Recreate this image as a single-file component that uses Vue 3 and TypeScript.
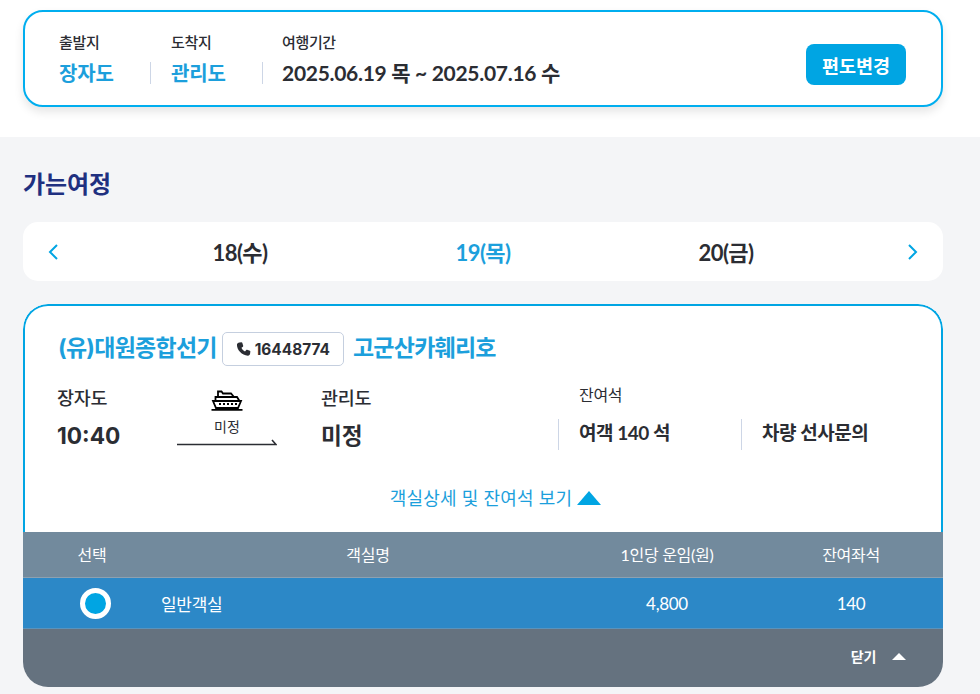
<template>
  <div class="page">
    <section class="top">
      <div class="search-box">
        <div class="search-col col-from">
          <span class="search-label">출발지</span>
          <strong class="search-port">장자도</strong>
        </div>
        <div class="search-col col-to">
          <span class="search-label">도착지</span>
          <strong class="search-port">관리도</strong>
        </div>
        <div class="search-col col-date">
          <span class="search-label">여행기간</span>
          <strong class="search-date">2025.06.19 목 ~ 2025.07.16 수</strong>
        </div>
        <button class="change-btn">편도변경</button>
      </div>
    </section>

    <section class="content">
      <h2 class="title">가는여정</h2>

      <div class="date-bar">
        <svg class="date-arrow" width="10" height="16" viewBox="0 0 10 16">
          <path d="M9 1 L2 8 L9 15" fill="none" stroke="#00a5e3" stroke-width="2" />
        </svg>
        <div class="date-list">
          <span v-for="d in dates" :key="d.label" class="date-item" :class="{ active: d.active }">{{ d.label }}</span>
        </div>
        <svg class="date-arrow" width="10" height="16" viewBox="0 0 10 16">
          <path d="M1 1 L8 8 L1 15" fill="none" stroke="#00a5e3" stroke-width="2" />
        </svg>
      </div>

      <div class="ship-card">
        <div class="ship-body">
          <div class="ship-head">
            <span class="ship-text">(유)대원종합선기</span>
            <span class="phone">
              <svg width="16" height="16" viewBox="0 0 24 24">
                <path fill="#2b2d33" d="M6.6 2.2 L9.8 2 C10.3 2 10.7 2.3 10.9 2.8 L12.3 7.2 C12.4 7.7 12.3 8.2 11.9 8.5 L9.7 10.3 C10.8 12.7 12.6 14.6 15 15.8 L16.9 13.6 C17.2 13.2 17.7 13.1 18.2 13.3 L22.3 14.8 C22.8 15 23.1 15.4 23 16 L22.6 19.3 C22.4 21 21 22.2 19.3 22.1 C10.3 21.4 3 14 2.9 5.7 C2.9 3.9 4.6 2.4 6.6 2.2 Z" />
              </svg>
              16448774
            </span>
            <span class="ship-text">고군산카훼리호</span>
          </div>

          <div class="route">
            <div class="route-port">
              <span class="port-name">장자도</span>
              <strong class="port-time">10:40</strong>
            </div>
            <div class="route-mid">
              <svg class="ship-icon" width="32" height="22" viewBox="0 0 32 22">
                <g fill="none" stroke="#000" stroke-width="1.8">
                  <path d="M7 8 V2.5 H10.5 L12 4.5 H20 L23 8" />
                  <path d="M4.5 12 V8 H26 L28.5 12" />
                  <path d="M2 12 H30 L27 19 H5 Z" />
                  <path d="M0.5 20.8 H31.5" />
                </g>
                <g fill="#000">
                  <rect x="8" y="14" width="2" height="2" />
                  <rect x="12" y="14" width="2" height="2" />
                  <rect x="16" y="14" width="2" height="2" />
                  <rect x="20" y="14" width="2" height="2" />
                  <rect x="24" y="14" width="2" height="2" />
                </g>
              </svg>
              <span class="mid-text">미정</span>
              <svg class="mid-line" width="100" height="8" viewBox="0 0 100 8">
                <path d="M0 6.5 H99 L95 2" fill="none" stroke="#2b2d33" stroke-width="1.6" />
              </svg>
            </div>
            <div class="route-port">
              <span class="port-name">관리도</span>
              <strong class="port-time">미정</strong>
            </div>
            <div class="seats">
              <span class="seats-label">잔여석</span>
              <div class="seats-row">
                <div class="seat-cell">여객 140 석</div>
                <div class="seat-cell">차량 선사문의</div>
              </div>
            </div>
          </div>

          <div class="detail-toggle">
            객실상세 및 잔여석 보기
            <svg width="24" height="14" viewBox="0 0 24 14"><path d="M12 0 L24 14 H0 Z" fill="#00a5e3" /></svg>
          </div>
        </div>

        <div class="table-row table-head">
          <span class="cell">선택</span>
          <span class="cell">객실명</span>
          <span class="cell">1인당 운임(원)</span>
          <span class="cell">잔여좌석</span>
        </div>
        <div v-for="room in rooms" :key="room.name" class="table-row table-item">
          <span class="cell"><i class="radio"></i></span>
          <span class="cell cell-left">{{ room.name }}</span>
          <span class="cell">{{ room.price }}</span>
          <span class="cell">{{ room.seats }}</span>
        </div>
        <div class="table-foot">
          <span class="close-text">닫기</span>
          <svg width="14" height="7" viewBox="0 0 14 7"><path d="M7 0 L14 7 H0 Z" fill="#fff" /></svg>
        </div>
      </div>
    </section>
  </div>
</template>

<script setup lang="ts">
import { ref } from 'vue';

const dates = ref([
  { label: '18(수)', active: false },
  { label: '19(목)', active: true },
  { label: '20(금)', active: false },
]);

const rooms = ref([{ name: '일반객실', price: '4,800', seats: 140 }]);
</script>

<style>
html, body {
  margin: 0;
  background: #f4f5f7;
}
</style>

<style scoped>
.page {
  height: 694px;
  overflow: hidden;
  font-family: Lato, "Noto Sans CJK KR", sans-serif;
  color: #2b2d33;
  background: #f4f5f7;
}

.top {
  height: 137px;
  box-sizing: border-box;
  padding: 10px 37px 0 23px;
  background: #fff;
}

.search-box {
  display: flex;
  align-items: center;
  height: 97px;
  box-sizing: border-box;
  padding: 0 35px 0 34px;
  border: 2px solid #00aeef;
  border-radius: 20px;
  background: #fff;
  box-shadow: 0 5px 10px rgba(0, 0, 0, 0.1);
}

.search-col {
  display: flex;
  flex-direction: column;
  gap: 8px;
  padding-top: 1px;
}

.col-from { width: 112px; }
.col-to { width: 111px; }

.search-label {
  font-size: 15px;
  line-height: 20px;
  font-weight: 500;
  letter-spacing: -0.35px;
}

.search-port {
  position: relative;
  font-size: 20px;
  line-height: 26px;
  font-weight: 700;
  letter-spacing: -0.1px;
  color: #1c9fdc;
}

.search-port::after {
  content: "";
  position: absolute;
  top: 2px;
  left: 91px;
  width: 1px;
  height: 22px;
  background: #cdd6e6;
}

.search-date {
  font-size: 21px;
  line-height: 26px;
  font-weight: 700;
  letter-spacing: -0.3px;
}

.change-btn {
  margin-left: auto;
  margin-top: 12px;
  width: 100px;
  height: 41px;
  padding: 0;
  border: 0;
  border-radius: 8px;
  background: #00a5e3;
  color: #fff;
  font-family: inherit;
  font-size: 18.5px;
  font-weight: 700;
}

.content {
  padding: 0 37px 0 23px;
}

.title {
  margin: 0;
  padding-top: 29px;
  font-size: 24px;
  line-height: 35px;
  font-weight: 700;
  letter-spacing: -0.1px;
  color: #1f3080;
}

.date-bar {
  display: flex;
  align-items: center;
  justify-content: space-between;
  height: 59px;
  margin-top: 21px;
  padding: 0 25px;
  box-sizing: border-box;
  background: #fff;
  border-radius: 15px;
}

.date-arrow {
  flex: none;
}

.date-list {
  display: flex;
  padding-bottom: 2px;
}

.date-item {
  width: 243px;
  text-align: center;
  font-size: 22px;
  font-weight: 700;
  letter-spacing: -0.6px;
}

.date-item.active {
  color: #1c9fdc;
}

.ship-card {
  margin-top: 23px;
  border-radius: 25px;
  overflow: hidden;
  background: #fff;
}

.ship-body {
  height: 228px;
  box-sizing: border-box;
  padding: 26px 0 0 33px;
  border: 2px solid #00a5e3;
  border-bottom: 0;
  border-radius: 25px 25px 0 0;
}

.ship-head {
  display: flex;
  align-items: center;
  height: 34px;
  font-family: Inter, "Noto Sans CJK KR", sans-serif;
  font-size: 23px;
  font-weight: 700;
  letter-spacing: -0.75px;
  color: #1c9fdc;
}

.ship-text {
  margin-bottom: 6px;
}

.phone {
  display: inline-flex;
  align-items: center;
  gap: 4px;
  height: 34px;
  box-sizing: border-box;
  margin: 0 9px 0 5px;
  padding: 0 13px 0 12px;
  border: 1px solid #c5cfdf;
  border-radius: 5px;
  font-size: 15.4px;
  letter-spacing: 0;
  color: #2b2d33;
}

.route {
  display: flex;
  margin-top: 17px;
  margin-left: -1px;
}

.route-port {
  display: flex;
  flex-direction: column;
  width: 120px;
}

.port-name {
  font-size: 18.5px;
  line-height: 30px;
  font-weight: 500;
  letter-spacing: -0.3px;
}

.port-time {
  margin-top: 8px;
  font-family: Inter, "Noto Sans CJK KR", sans-serif;
  font-size: 22.7px;
  line-height: 30px;
  font-weight: 700;
}

.route-mid {
  display: flex;
  flex-direction: column;
  align-items: center;
  width: 100px;
  margin-right: 44px;
}

.ship-icon {
  margin-top: 6px;
}

.mid-text {
  margin-top: 6px;
  font-size: 14px;
  line-height: 20px;
}

.mid-line {
  margin-top: 1px;
}

.seats {
  margin-left: 117px;
  margin-top: -1px;
}

.seats-label {
  display: block;
  padding-left: 21px;
  font-size: 16px;
  line-height: 26px;
  letter-spacing: -0.3px;
}

.seats-row {
  display: flex;
  margin-top: 11px;
}

.seat-cell {
  width: 183px;
  height: 31px;
  box-sizing: border-box;
  padding-left: 20px;
  border-left: 1px solid #cdd6e6;
  font-size: 19px;
  line-height: 27px;
  font-weight: 700;
  letter-spacing: -0.45px;
}

.detail-toggle {
  display: flex;
  align-items: center;
  justify-content: center;
  gap: 5px;
  margin-top: 33px;
  margin-left: -8px;
  font-size: 18px;
  line-height: 28px;
  letter-spacing: 0.25px;
  color: #1c9fdc;
}

.table-row {
  display: grid;
  grid-template-columns: 15% 45% 20% 20%;
  align-items: center;
  color: #fff;
}

.cell {
  display: flex;
  justify-content: center;
}

.cell-left {
  justify-content: flex-start;
}

.table-head {
  height: 46px;
  box-sizing: border-box;
  padding-bottom: 2px;
  background: #728a9d;
  border-bottom: 1px solid #8da1b1;
  font-size: 16px;
  letter-spacing: -0.3px;
}

.table-item {
  height: 51px;
  box-sizing: border-box;
  background: #2c88c7;
  border-bottom: 1px solid #5a93bc;
  font-size: 17px;
  letter-spacing: -0.3px;
}

.radio {
  display: block;
  width: 21px;
  height: 21px;
  margin-left: 6px;
  border: 5px solid #fff;
  border-radius: 50%;
  background: #00a5e3;
}

.table-foot {
  display: flex;
  align-items: center;
  justify-content: flex-end;
  gap: 16px;
  height: 58px;
  box-sizing: border-box;
  padding: 0 37px 4px 0;
  background: #65727f;
  color: #fff;
  font-size: 14px;
  font-weight: 700;
}

.close-text {
  letter-spacing: -0.3px;
}
</style>
